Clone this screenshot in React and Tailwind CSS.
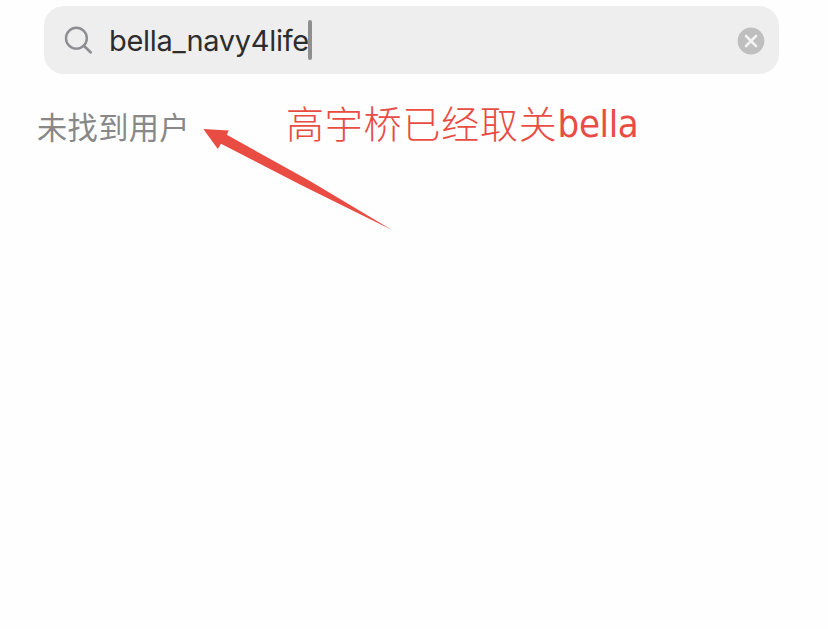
import React, { useState } from 'react';

// 放大鏡圖標
function SearchIcon() {
  return (
    <svg className="block h-[30px] w-[30px] shrink-0" viewBox="0 0 30 30" fill="none" stroke="#8d8d92">
      <circle cx="12.4" cy="13.2" r="10.4" strokeWidth="2.4" />
      <path d="M19.8 20.8L26.6 27.2" strokeWidth="2.7" strokeLinecap="round" />
    </svg>
  );
}

// 清除圖標
function ClearIcon() {
  return (
    <svg className="block h-[28px] w-[28px]" viewBox="0 0 28 28">
      <circle cx="14" cy="14" r="13.4" fill="#bfbfbf" />
      <path d="M9 9L19 19M19 9L9 19" stroke="#f3f3f3" strokeWidth="2.6" strokeLinecap="round" />
    </svg>
  );
}

// 指向搜索結果的紅色箭頭
function Arrow() {
  return (
    <svg className="absolute left-[200px] top-[124px] h-[112px] w-[200px]" viewBox="200 124 200 112">
      <path d="M203.3 129L228.8 130.4L226.8 134.8L309.5 180.7L392 230L301 185L221 143.7L217.8 149Z" fill="#e84c43" />
    </svg>
  );
}

function App() {
  const [query, setQuery] = useState('bella_navy4life');

  return (
    <div className="relative min-h-screen overflow-hidden bg-[#fefefe] px-11 pt-[6px]">
      {/* 搜索框 */}
      <div className="flex h-[68px] w-[735px] items-center rounded-[20px] bg-[#eeeeee] pl-[20px] pr-[14px]">
        <SearchIcon />
        <div className="ml-[15px] flex flex-1 items-center">
          <span className="whitespace-nowrap pt-px font-['Inter',sans-serif] text-[29px] leading-[40px] tracking-[-0.3px] text-[#2d2d2d]">
            {query}
          </span>
          <span className="-ml-px h-10 w-1 shrink-0 rounded-sm bg-[#8f8f8f]"></span>
        </div>
        <button className="mt-0.5" onClick={() => setQuery('')} aria-label="清除">
          <ClearIcon />
        </button>
      </div>

      {/* 搜索結果 */}
      <div className="-ml-[7px] mt-[26px] flex h-[50px] items-center whitespace-nowrap">
        <p className="w-[249px] pt-0.5 font-['Noto_Sans_CJK_SC',sans-serif] text-[30.2px] leading-[50px] tracking-[0.4px] text-[#888888]">
          未找到用户
        </p>
        <p className="-mt-[6px] flex leading-[50px] text-[#e84c43]">
          <span className="font-['Noto_Sans_CJK_SC',sans-serif] text-[38px] font-light tracking-[0.8px]">
            高宇桥已经取关
          </span>
          <span className="mt-[2px] -mb-[2px] font-['DejaVu_Sans_Condensed','DejaVu_Sans',sans-serif] text-[38px] tracking-[-0.4px]">bella</span>
        </p>
      </div>

      <Arrow />
    </div>
  );
}

export default App;
